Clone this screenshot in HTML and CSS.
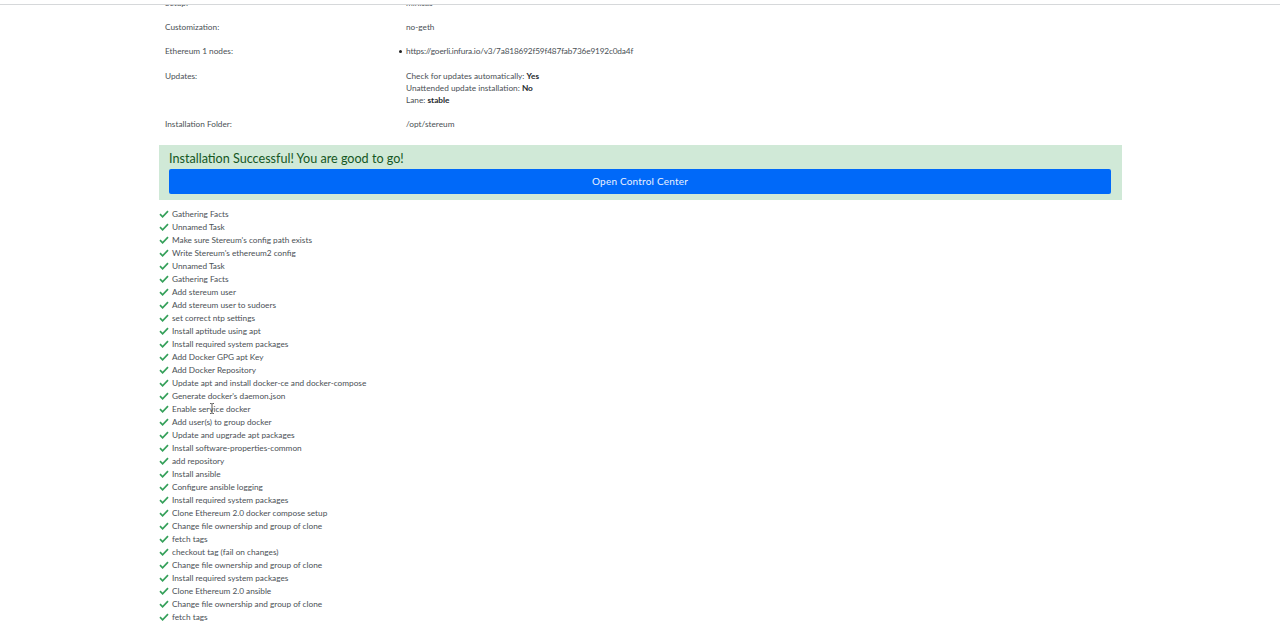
FILE: index.html
```html
<!DOCTYPE html>
<html lang="en">
<head>
<meta charset="utf-8">
<title>Installation</title>
<link rel="stylesheet" href="styles.css">
</head>
<body>
<div class="topline"></div>
<main class="page">
  <section class="details">
    <div class="row"><div class="label">Setup:</div><div class="value">minisas</div></div>
    <div class="row"><div class="label">Customization:</div><div class="value">no-geth</div></div>
    <div class="row"><div class="label">Ethereum 1 nodes:</div><ul class="nodes"><li>https://goerli.infura.io/v3/7a818692f59f487fab736e9192c0da4f</li></ul></div>
    <div class="row updates"><div class="label">Updates:</div><div class="value">Check for updates automatically: <b>Yes</b><br>Unattended update installation: <b>No</b><br>Lane: <b>stable</b></div></div>
    <div class="row"><div class="label">Installation Folder:</div><div class="value">/opt/stereum</div></div>
  </section>
  <section class="alert">
    <h2 class="alert-title">Installation Successful! You are good to go!</h2>
    <button class="open">Open Control Center</button>
  </section>
  <ul class="tasks">
    <li><svg class="check" viewBox="0 0 10 8"><path d="M1 4.2 3.6 6.8 9 1.2"/></svg>Gathering Facts</li>
    <li><svg class="check" viewBox="0 0 10 8"><path d="M1 4.2 3.6 6.8 9 1.2"/></svg>Unnamed Task</li>
    <li><svg class="check" viewBox="0 0 10 8"><path d="M1 4.2 3.6 6.8 9 1.2"/></svg>Make sure Stereum's config path exists</li>
    <li><svg class="check" viewBox="0 0 10 8"><path d="M1 4.2 3.6 6.8 9 1.2"/></svg>Write Stereum's ethereum2 config</li>
    <li><svg class="check" viewBox="0 0 10 8"><path d="M1 4.2 3.6 6.8 9 1.2"/></svg>Unnamed Task</li>
    <li><svg class="check" viewBox="0 0 10 8"><path d="M1 4.2 3.6 6.8 9 1.2"/></svg>Gathering Facts</li>
    <li><svg class="check" viewBox="0 0 10 8"><path d="M1 4.2 3.6 6.8 9 1.2"/></svg>Add stereum user</li>
    <li><svg class="check" viewBox="0 0 10 8"><path d="M1 4.2 3.6 6.8 9 1.2"/></svg>Add stereum user to sudoers</li>
    <li><svg class="check" viewBox="0 0 10 8"><path d="M1 4.2 3.6 6.8 9 1.2"/></svg>set correct ntp settings</li>
    <li><svg class="check" viewBox="0 0 10 8"><path d="M1 4.2 3.6 6.8 9 1.2"/></svg>Install aptitude using apt</li>
    <li><svg class="check" viewBox="0 0 10 8"><path d="M1 4.2 3.6 6.8 9 1.2"/></svg>Install required system packages</li>
    <li><svg class="check" viewBox="0 0 10 8"><path d="M1 4.2 3.6 6.8 9 1.2"/></svg>Add Docker GPG apt Key</li>
    <li><svg class="check" viewBox="0 0 10 8"><path d="M1 4.2 3.6 6.8 9 1.2"/></svg>Add Docker Repository</li>
    <li><svg class="check" viewBox="0 0 10 8"><path d="M1 4.2 3.6 6.8 9 1.2"/></svg>Update apt and install docker-ce and docker-compose</li>
    <li><svg class="check" viewBox="0 0 10 8"><path d="M1 4.2 3.6 6.8 9 1.2"/></svg>Generate docker's daemon.json</li>
    <li class="has-cursor"><svg class="check" viewBox="0 0 10 8"><path d="M1 4.2 3.6 6.8 9 1.2"/></svg>Enable service docker<svg class="ibeam" viewBox="0 0 6 11"><path d="M1 .5h1.2L3 1.2 3.8.5H5M3 1.2v8.6M1 10.5h1.2L3 9.8l.8.7H5"/></svg></li>
    <li><svg class="check" viewBox="0 0 10 8"><path d="M1 4.2 3.6 6.8 9 1.2"/></svg>Add user(s) to group docker</li>
    <li><svg class="check" viewBox="0 0 10 8"><path d="M1 4.2 3.6 6.8 9 1.2"/></svg>Update and upgrade apt packages</li>
    <li><svg class="check" viewBox="0 0 10 8"><path d="M1 4.2 3.6 6.8 9 1.2"/></svg>Install software-properties-common</li>
    <li><svg class="check" viewBox="0 0 10 8"><path d="M1 4.2 3.6 6.8 9 1.2"/></svg>add repository</li>
    <li><svg class="check" viewBox="0 0 10 8"><path d="M1 4.2 3.6 6.8 9 1.2"/></svg>Install ansible</li>
    <li><svg class="check" viewBox="0 0 10 8"><path d="M1 4.2 3.6 6.8 9 1.2"/></svg>Configure ansible logging</li>
    <li><svg class="check" viewBox="0 0 10 8"><path d="M1 4.2 3.6 6.8 9 1.2"/></svg>Install required system packages</li>
    <li><svg class="check" viewBox="0 0 10 8"><path d="M1 4.2 3.6 6.8 9 1.2"/></svg>Clone Ethereum 2.0 docker compose setup</li>
    <li><svg class="check" viewBox="0 0 10 8"><path d="M1 4.2 3.6 6.8 9 1.2"/></svg>Change file ownership and group of clone</li>
    <li><svg class="check" viewBox="0 0 10 8"><path d="M1 4.2 3.6 6.8 9 1.2"/></svg>fetch tags</li>
    <li><svg class="check" viewBox="0 0 10 8"><path d="M1 4.2 3.6 6.8 9 1.2"/></svg>checkout tag (fail on changes)</li>
    <li><svg class="check" viewBox="0 0 10 8"><path d="M1 4.2 3.6 6.8 9 1.2"/></svg>Change file ownership and group of clone</li>
    <li><svg class="check" viewBox="0 0 10 8"><path d="M1 4.2 3.6 6.8 9 1.2"/></svg>Install required system packages</li>
    <li><svg class="check" viewBox="0 0 10 8"><path d="M1 4.2 3.6 6.8 9 1.2"/></svg>Clone Ethereum 2.0 ansible</li>
    <li><svg class="check" viewBox="0 0 10 8"><path d="M1 4.2 3.6 6.8 9 1.2"/></svg>Change file ownership and group of clone</li>
    <li><svg class="check" viewBox="0 0 10 8"><path d="M1 4.2 3.6 6.8 9 1.2"/></svg>fetch tags</li>
  </ul>
</main>
</body>
</html>
```
FILE: styles.css
```css
html, body {
  margin: 0;
  height: 625px;
  overflow: hidden;
  background: #fff;
}
body {
  font-family: Lato, "Noto Sans", sans-serif;
  font-size: 8.25px;
  line-height: 12px;
  color: #4a5055;
}
.topline {
  position: absolute;
  top: 0;
  left: 0;
  right: 0;
  height: 4px;
  border-bottom: 1px solid #d6d8da;
  background: #fff;
}
.page {
  width: 963px;
  margin: -3px 0 0 159px;
}
.details {
  display: flex;
  flex-direction: column;
  gap: 12px;
}
.row {
  display: flex;
  padding-left: 6px;
}
.updates {
  margin-top: 1px;
}
.label {
  width: 241px;
}
.nodes {
  margin: 0;
  padding: 0;
  list-style: none;
  letter-spacing: -.15px;
}
.nodes li {
  position: relative;
}
.nodes li::before {
  content: "";
  position: absolute;
  left: -7px;
  top: 5px;
  width: 3px;
  height: 3px;
  border-radius: 50%;
  background: #222;
}
.value b {
  font-weight: 700;
  color: #25292c;
}
.alert {
  margin-top: 15px;
  height: 55px;
  box-sizing: border-box;
  padding: 6px 11px 0 10px;
  background: #d0e9d7;
}
.alert-title {
  margin: 0 0 2px;
  font-size: 12.6px;
  line-height: 16px;
  font-weight: 400;
  color: #155724;
}
.open {
  display: block;
  width: 100%;
  height: 25px;
  padding: 0 0 2px;
  border: 0;
  border-radius: 2px;
  background: #0069f9;
  color: #e9f1ff;
  font-family: inherit;
  font-size: 10px;
  letter-spacing: .2px;
}
.tasks {
  margin: 7px 0 0;
  padding: 0;
  list-style: none;
}
.tasks li {
  position: relative;
  display: flex;
  align-items: center;
  height: 13px;
}
.check {
  width: 10px;
  height: 8px;
  margin-right: 3px;
  flex: none;
  fill: none;
  stroke: #35a05a;
  stroke-width: 1.7;
}
.ibeam {
  position: absolute;
  left: 50px;
  top: 1px;
  width: 6px;
  height: 11px;
  fill: none;
  stroke: #333;
  stroke-width: .8;
}
```
